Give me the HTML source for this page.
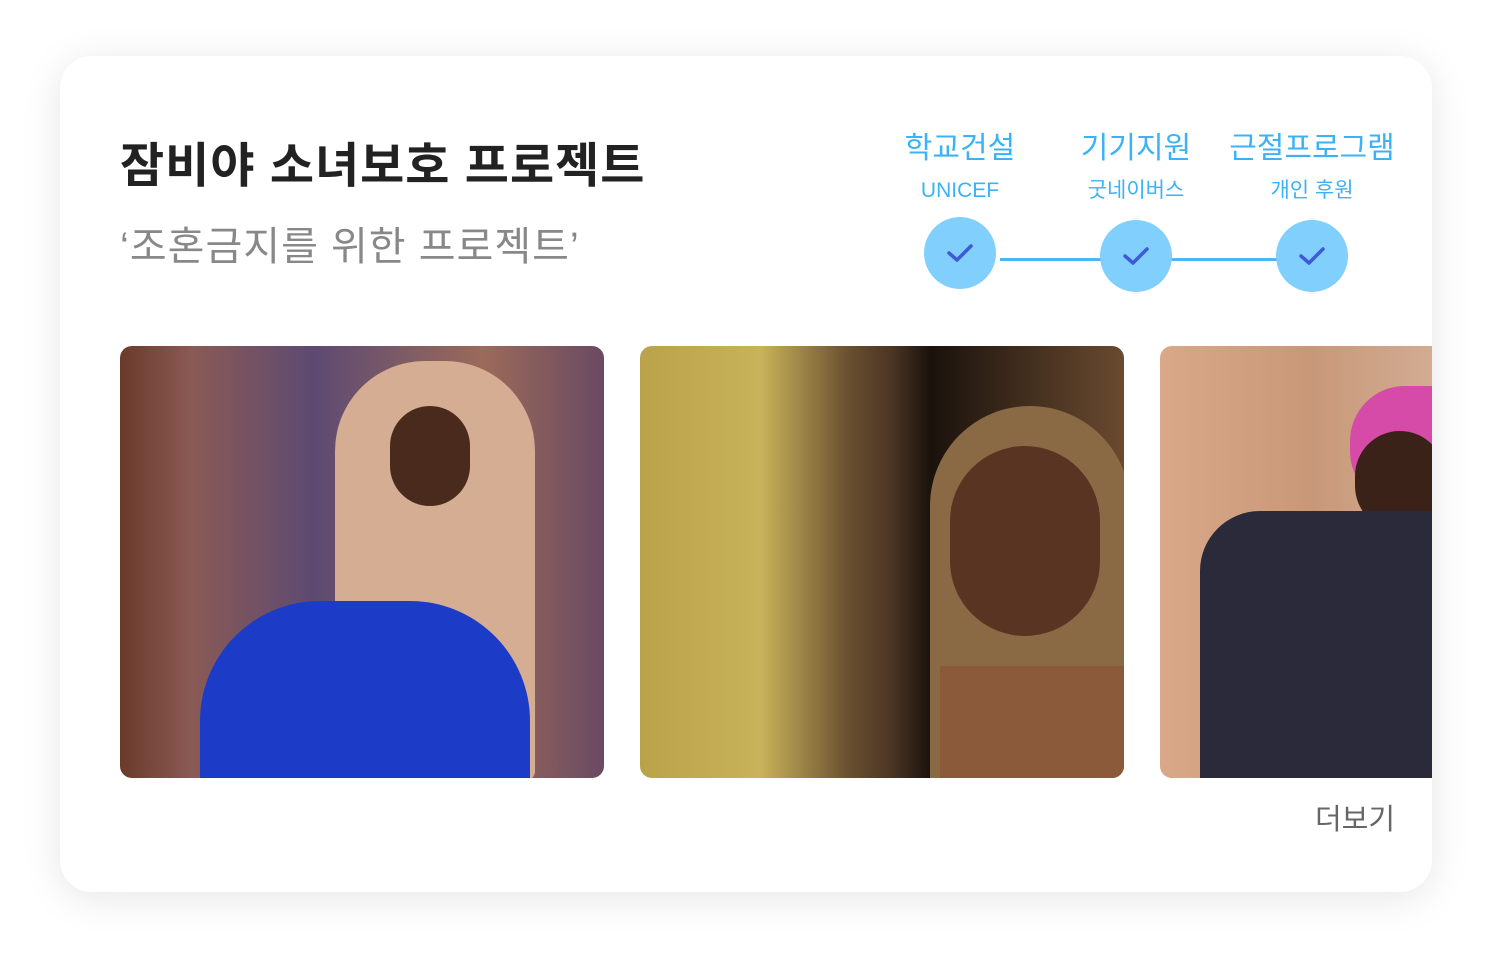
<!DOCTYPE html>
<html><head><meta charset="utf-8"><style>
html,body{margin:0;padding:0;background:#fff;}
body{width:1492px;height:956px;position:relative;overflow:hidden;font-family:"Liberation Sans","Noto Sans CJK KR",sans-serif;}
.card{position:absolute;left:60px;top:56px;width:1372px;height:836px;background:#fff;border-radius:32px;box-shadow:0 6px 40px rgba(0,0,0,0.10);overflow:hidden;}
.t{position:absolute;white-space:nowrap;}
.title{left:60px;top:81px;font-size:48px;font-weight:bold;color:#222;letter-spacing:1px;line-height:60px;}
.sub{left:60px;top:166px;font-size:40px;color:#888;letter-spacing:1px;line-height:50px;}
.lab{width:200px;text-align:center;color:#3cb2f6;font-size:30px;line-height:36px;}
.sl{width:200px;text-align:center;color:#3cb2f6;font-size:21px;line-height:28px;}
.c{position:absolute;width:72px;height:72px;border-radius:50%;background:#80cffd;}
.c svg{position:absolute;left:22px;top:22px;}
.line{position:absolute;height:3px;background:#4ab6f5;top:202px;}
.img{position:absolute;top:290px;height:432px;border-radius:12px;overflow:hidden;}
.more{right:37px;top:744px;font-size:29px;color:#666;line-height:40px;}
</style></head><body>
<div class="card">
<div class="t title">잠비야 소녀보호 프로젝트</div>
<div class="t sub">‘조혼금지를 위한 프로젝트’</div>

<div class="t lab" style="left:800px;top:75px">학교건설</div>
<div class="t sl" style="left:800px;top:121px">UNICEF</div>
<div class="t lab" style="left:976px;top:75px">기기지원</div>
<div class="t sl" style="left:976px;top:121px">굿네이버스</div>
<div class="t lab" style="left:1152px;top:75px">근절프로그램</div>
<div class="t sl" style="left:1152px;top:121px">개인 후원</div>

<div class="line" style="left:940px;width:300px"></div>
<div class="c" style="left:864px;top:161px"><svg width="28" height="28" viewBox="0 0 28 28"><path d="M3 14 L11 21 L25 7" fill="none" stroke="#3f5ad8" stroke-width="3.5" stroke-linecap="round" stroke-linejoin="round"/></svg></div>
<div class="c" style="left:1040px;top:164px"><svg width="28" height="28" viewBox="0 0 28 28"><path d="M3 14 L11 21 L25 7" fill="none" stroke="#3f5ad8" stroke-width="3.5" stroke-linecap="round" stroke-linejoin="round"/></svg></div>
<div class="c" style="left:1216px;top:164px"><svg width="28" height="28" viewBox="0 0 28 28"><path d="M3 14 L11 21 L25 7" fill="none" stroke="#3f5ad8" stroke-width="3.5" stroke-linecap="round" stroke-linejoin="round"/></svg></div>

<div class="img" style="left:60px;width:484px;background:linear-gradient(90deg,#6a3a2a 0%,#8a5a55 15%,#5d4a72 40%,#9b6a5a 75%,#6a4a62 100%);">
  <div style="position:absolute;left:215px;top:15px;width:200px;height:420px;border-radius:90px 90px 10px 10px;background:#d4ad92;"></div>
  <div style="position:absolute;left:270px;top:60px;width:80px;height:100px;border-radius:40px;background:#4a2a1c;"></div>
  <div style="position:absolute;left:80px;top:255px;width:330px;height:180px;border-radius:120px 120px 0 0;background:#1c3cc8;"></div>
</div>
<div class="img" style="left:580px;width:484px;background:linear-gradient(90deg,#b9a24a 0%,#c8b25a 25%,#6a5030 43%,#4b3525 52%,#1a120c 60%,#6a4a30 100%);">
  <div style="position:absolute;left:290px;top:60px;width:200px;height:380px;border-radius:100px 100px 0 0;background:#8a6a45;"></div>
  <div style="position:absolute;left:310px;top:100px;width:150px;height:190px;border-radius:75px;background:#5a3422;"></div>
  <div style="position:absolute;left:300px;top:320px;width:184px;height:120px;background:#8a5a3a;"></div>
</div>
<div class="img" style="left:1100px;width:300px;background:linear-gradient(90deg,#d8a888 0%,#c89878 50%,#d4b098 100%);">
  <div style="position:absolute;left:190px;top:40px;width:110px;height:120px;border-radius:55px 0 0 55px;background:#d64aa8;"></div>
  <div style="position:absolute;left:195px;top:85px;width:90px;height:100px;border-radius:45px;background:#3a2218;"></div>
  <div style="position:absolute;left:40px;top:165px;width:260px;height:270px;border-radius:60px 0 0 0;background:#2a2a3a;"></div>
</div>

<div class="t more">더보기</div>
</div>
</body></html>
